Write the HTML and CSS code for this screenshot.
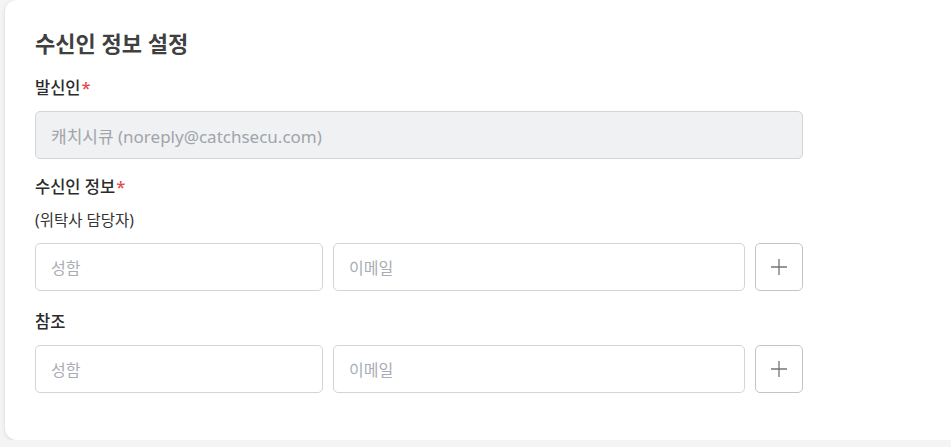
FILE: index.html
```html
<!DOCTYPE html>
<html lang="ko">
<head>
<meta charset="utf-8">
<link rel="stylesheet" href="styles.css">
</head>
<body>
<section class="card">
  <h2 class="title">수신인 정보 설정</h2>
  <div class="field">
    <label class="label">발신인<span class="req">*</span></label>
    <div class="input input-disabled">캐치시큐 (noreply@catchsecu.com)</div>
  </div>
  <div class="field">
    <label class="label label-tight">수신인 정보<span class="req">*</span></label>
    <div class="sub">(위탁사 담당자)</div>
    <div class="row">
      <div class="input"><span class="ph">성함</span></div>
      <div class="input"><span class="ph">이메일</span></div>
      <button class="add" type="button"><svg width="18" height="18" viewBox="0 0 18 18"><path d="M9 1v16M1 9h16" stroke="#757575" stroke-width="1.3" fill="none"/></svg></button>
    </div>
  </div>
  <div class="field field-last">
    <label class="label">참조</label>
    <div class="row">
      <div class="input"><span class="ph">성함</span></div>
      <div class="input"><span class="ph">이메일</span></div>
      <button class="add" type="button"><svg width="18" height="18" viewBox="0 0 18 18"><path d="M9 1v16M1 9h16" stroke="#757575" stroke-width="1.3" fill="none"/></svg></button>
    </div>
  </div>
</section>
</body>
</html>
```

FILE: styles.css
```css
html, body {
  margin: 0;
  padding: 0;
  background: #f4f4f5;
  font-family: "Noto Sans", "Noto Sans CJK KR", sans-serif;
  overflow: hidden;
}
.card {
  margin-left: 5px;
  width: 1000px;
  height: 440px;
  box-sizing: border-box;
  background: #fff;
  border-radius: 12px;
  box-shadow: 0 1px 4px rgba(0,0,0,0.12);
  padding: 28px 30px 0 30px;
}
.title {
  margin: 0;
  font-size: 22px;
  line-height: 30px;
  font-weight: 700;
  color: #404040;
}
.field {
  display: flex;
  flex-direction: column;
  width: 768px;
  margin-top: 18px;
}
.field + .field { margin-top: 16px; }
.field-last { margin-top: 19px !important; }
.label {
  font-size: 16.5px;
  line-height: 24px;
  font-weight: 500;
  color: #2b2b2b;
  margin-bottom: 11px;
}
.label-tight { margin-bottom: 10px; }
.req { color: #e5484d; margin-left: 1px; }
.sub {
  font-size: 15.5px;
  line-height: 22px;
  color: #333;
  margin-bottom: 12px;
}
.input {
  box-sizing: border-box;
  height: 48px;
  border: 1px solid #d4d4d8;
  border-radius: 5px;
  background: #fff;
  display: flex;
  align-items: center;
  padding: 0 15px;
  font-size: 17px;
  color: #9ca3af;
}
.input-disabled {
  background: #f0f1f3;
  color: #a0a4ab;
}
.ph { color: #a8adb5; font-size: 16px; }
.row {
  display: grid;
  grid-template-columns: 288px 1fr 48px;
  gap: 10px;
}
.add {
  box-sizing: border-box;
  width: 48px;
  height: 48px;
  border: 1px solid #c4c4c8;
  border-radius: 5px;
  background: #fff;
  display: flex;
  align-items: center;
  justify-content: center;
  padding: 0;
}
```
